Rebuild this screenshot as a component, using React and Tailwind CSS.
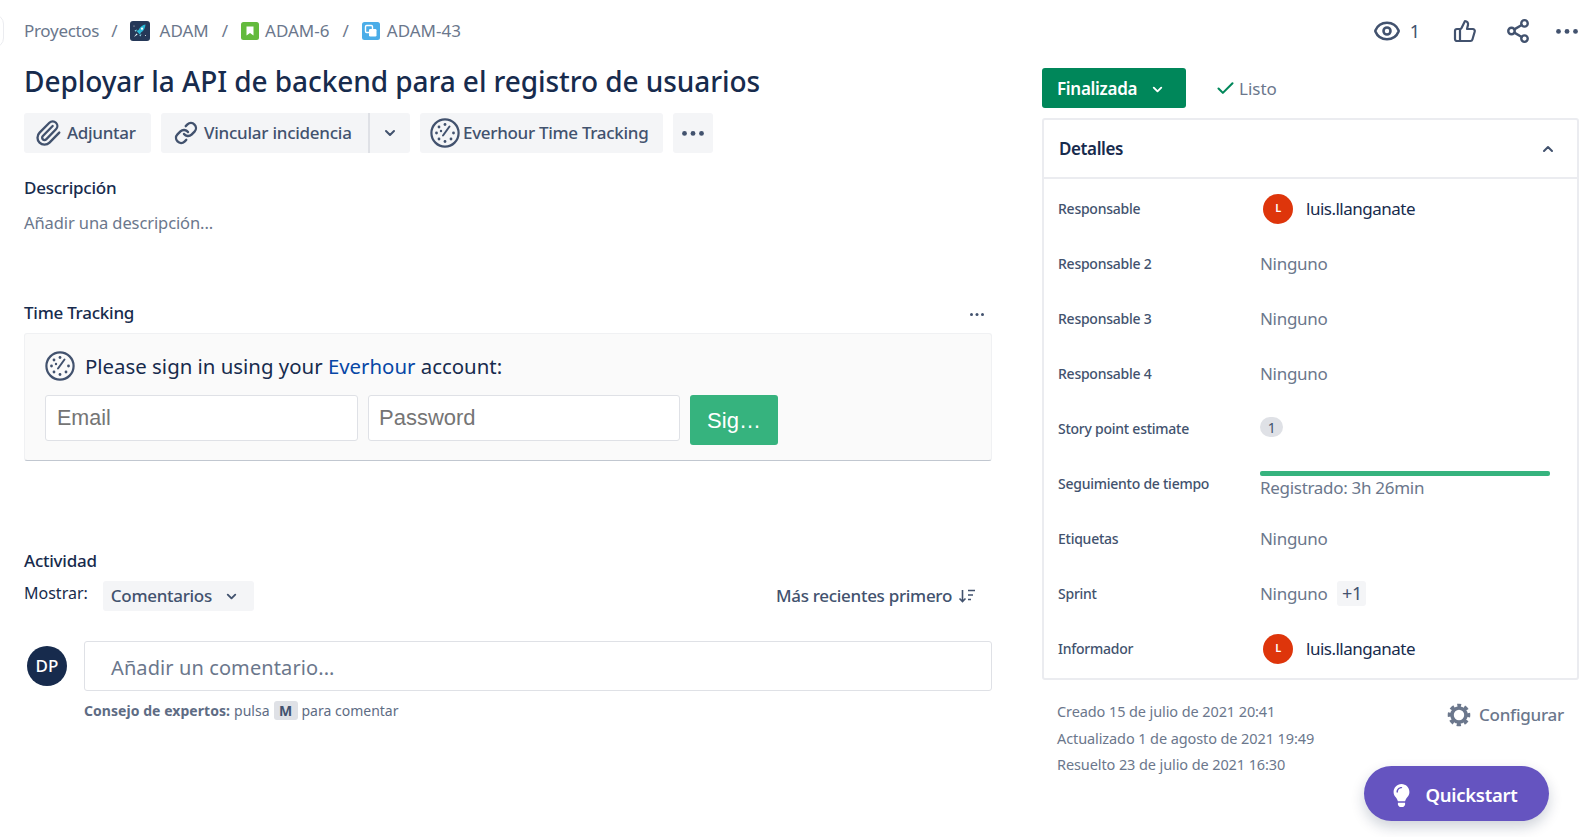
import React from "react";
import { Paperclip, Link, ChevronDown, ChevronUp, Eye, ThumbsUp, Share2, Check } from "lucide-react";
import { FaLightbulb } from "react-icons/fa";

function Everhour({ size = 30 }) {
  return (
    <svg width={size} height={size} viewBox="0 0 30 30" fill="none" className="shrink-0">
      <circle cx="15" cy="15" r="13.6" stroke="#42526e" strokeWidth="2.2" />
      <path d="M13 17.5 19.5 8.5" stroke="#42526e" strokeWidth="2" strokeLinecap="round" />
      <g fill="#42526e">
        <circle cx="15" cy="6.5" r="1.4" />
        <circle cx="9" cy="9" r="1.4" />
        <circle cx="6.5" cy="15" r="1.4" />
        <circle cx="9" cy="21" r="1.4" />
        <circle cx="15" cy="23.5" r="1.4" />
        <circle cx="21" cy="21" r="1.4" />
        <circle cx="23.5" cy="15" r="1.4" />
        <circle cx="11" cy="13" r="1.2" />
      </g>
    </svg>
  );
}

function Rocket() {
  return (
    <svg width="20" height="20" viewBox="0 0 20 20" className="shrink-0">
      <rect width="20" height="20" rx="3" fill="#253858" />
      <path d="M15.5 3.5c-3 .4-5.2 2.4-7 5.4l-2 1.1 3.4 3.4 1.1-1.9c3-1.8 4.3-4.8 4.5-8z" fill="#2ab8d6" />
      <path d="M6.5 12.5 4 16l3.6-2.4z" fill="#e8f6fa" />
      <path d="M7 8.5 4.5 9.5l1.3 1.2zM11.5 13l-1 2.5-1.2-1.3z" fill="#8fdcec" />
      <circle cx="12" cy="7.7" r="1.1" fill="#fff" />
      <circle cx="4" cy="5" r=".5" fill="#fff" />
      <circle cx="15.5" cy="14.5" r=".5" fill="#fff" />
    </svg>
  );
}

function Story() {
  return (
    <svg width="18" height="18" viewBox="0 0 18 18" className="shrink-0">
      <rect width="18" height="18" rx="2.5" fill="#63ba3c" />
      <path d="M5.5 4.5h7v9L9 11l-3.5 2.5z" fill="#fff" />
    </svg>
  );
}

function Subtask() {
  return (
    <svg width="18" height="18" viewBox="0 0 18 18" className="shrink-0">
      <rect width="18" height="18" rx="2.5" fill="#4bade8" />
      <rect x="3.5" y="3.5" width="7" height="7" rx="1.2" fill="none" stroke="#fff" strokeWidth="1.4" />
      <rect x="7" y="7" width="7.5" height="7.5" rx="1.2" fill="#fff" />
    </svg>
  );
}

function Dots({ r = 2, w = 20, gap = 7 }) {
  const c = w / 2;
  return (
    <svg width={w} height={r * 2 + 2} viewBox={`0 0 ${w} ${r * 2 + 2}`} fill="#42526e">
      <circle cx={c - gap} cy={r + 1} r={r} />
      <circle cx={c} cy={r + 1} r={r} />
      <circle cx={c + gap} cy={r + 1} r={r} />
    </svg>
  );
}

function Sort() {
  return (
    <svg width="18" height="16" viewBox="0 0 18 16" fill="none" stroke="#42526e" strokeWidth="1.6">
      <path d="M4.5 2v11M1.5 10.5l3 3 3-3" />
      <path d="M10 2.5h7M10 7h5M10 11.5h3" />
    </svg>
  );
}

function Gear() {
  return (
    <svg width="24" height="24" viewBox="0 0 24 24" fill="none" stroke="#6b778c" className="shrink-0">
      <circle cx="12" cy="12" r="7" strokeWidth="3.6" />
      <circle cx="12" cy="12" r="9.6" strokeWidth="3.4" strokeDasharray="4.2 3.34" strokeDashoffset="2.1" transform="rotate(-90 12 12)" />
    </svg>
  );
}

function Avatar() {
  return (
    <div className="w-[30px] h-[30px] rounded-full bg-[#de350b] text-white text-[11px] font-semibold flex items-center justify-center shrink-0">
      L
    </div>
  );
}

function Row({ label, children }) {
  return (
    <div className="flex items-center h-[55px]">
      <div className="w-[202px] -ml-px shrink-0 text-[14px] font-medium text-[#42526e] tracking-[-0.25px]">{label}</div>
      <div className="flex-1 text-[17px] text-[#6b778c] tracking-[-0.3px]">{children}</div>
    </div>
  );
}

function User() {
  return (
    <div className="flex items-center gap-[13px] pl-[3px] text-[#172b4d] tracking-[-0.5px]">
      <Avatar />
      <span>luis.llanganate</span>
    </div>
  );
}

const Sep = () => <span className="text-[#6b778c]">/</span>;

export default function App() {
  return (
    <div className="relative w-[1595px] h-[837px] overflow-hidden bg-white flex pl-6 gap-[50px] text-[#172b4d] font-['Noto_Sans',sans-serif]">
      <div className="absolute left-[-16px] top-[14px] w-[20px] h-[34px] rounded-full border border-[#ebecf0]" />

      <main className="w-[968px] shrink-0 flex flex-col">
        <nav className="flex items-center h-[20px] mt-[21px] text-[17px] text-[#6b778c]">
          <span className="tracking-[-0.3px]">Proyectos</span>
          <span className="mx-[12px]"><Sep /></span>
          <Rocket />
          <span className="ml-[10px]">ADAM</span>
          <span className="mx-[13px]"><Sep /></span>
          <Story />
          <span className="ml-[6px]">ADAM-6</span>
          <span className="mx-[13px]"><Sep /></span>
          <Subtask />
          <span className="ml-[7px]">ADAM-43</span>
        </nav>

        <h1 className="mt-[18px] h-[44px] leading-[44px] text-[28px] font-medium text-[#172b4d] tracking-[-0.07px] whitespace-nowrap">
          Deployar la API de backend para el registro de usuarios
        </h1>

        <div className="mt-[10px] flex items-center gap-[10px] text-[17px] font-medium text-[#42526e] tracking-[-0.3px]">
          <button className="h-10 w-[127px] rounded-[3px] bg-[#f4f5f7] flex items-center pl-[10px] gap-[5px]">
            <Paperclip size={28} strokeWidth={2} />
            <span>Adjuntar</span>
          </button>
          <div className="h-10 w-[249px] rounded-[3px] bg-[#f4f5f7] flex items-center">
            <button className="h-10 w-[209px] flex items-center pl-[13px] gap-[6px] border-r-2 border-[#dfe1e6] tracking-[-0.25px]">
              <Link size={24} strokeWidth={2.4} />
              <span>Vincular incidencia</span>
            </button>
            <button className="flex-1 flex justify-center">
              <ChevronDown size={16} strokeWidth={3} />
            </button>
          </div>
          <button className="h-10 w-[243px] rounded-[3px] bg-[#f4f5f7] flex items-center pl-[10px] gap-[3px]">
            <Everhour />
            <span>Everhour Time Tracking</span>
          </button>
          <button className="h-10 w-10 rounded-[3px] bg-[#f4f5f7] flex items-center justify-center">
            <Dots r={2.4} w={24} gap={8.5} />
          </button>
        </div>

        <h2 className="mt-[24px] h-[22px] leading-[22px] text-[17px] font-medium tracking-[-0.25px]">Descripción</h2>
        <p className="mt-[13px] h-[22px] leading-[22px] text-[16.5px] text-[#6b778c] tracking-[-0.1px]">Añadir una descripción...</p>

        <div className="mt-[68px] h-[22px] flex items-center justify-between">
          <h2 className="text-[17px] font-medium tracking-[-0.25px]">Time Tracking</h2>
          <span className="mr-[6px] mt-[3px]"><Dots r={1.5} w={18} gap={5.5} /></span>
        </div>

        <section className="mt-[9px] h-[128px] rounded-[3px] bg-[#fafafa] border border-[#f0f1f3] border-b-[#c1c7d0] pl-[20px] pt-[17px]">
          <div className="flex items-center gap-[10px] h-[30px] text-[20.4px]">
            <Everhour />
            <p>
              Please sign in using your <span className="text-[#0747a6]">Everhour</span> account:
            </p>
          </div>
          <form className="mt-[14px] flex items-start gap-[10px]">
            <input placeholder="Email" className="w-[313px] h-[46px] px-[11px] rounded-[3px] bg-white border border-[#dfe1e6] text-[21.5px] font-['Liberation_Sans',sans-serif] placeholder:text-[#757575]" />
            <input placeholder="Password" className="w-[312px] h-[46px] px-[10px] rounded-[3px] bg-white border border-[#dfe1e6] text-[22px] font-['Liberation_Sans',sans-serif] placeholder:text-[#757575]" />
            <button type="button" className="w-[88px] h-[50px] rounded-[3px] bg-[#36b37e] text-white text-[22px] font-['Liberation_Sans',sans-serif]">Sig…</button>
          </form>
        </section>

        <h2 className="mt-[89px] h-[22px] leading-[22px] text-[17px] font-medium tracking-[-0.25px]">Actividad</h2>

        <div className="mt-[9px] flex items-center h-[30px] pr-[16px]">
          <span className="text-[16px] text-[#172b4d] -mt-[6px]">Mostrar:</span>
          <button className="ml-[15px] w-[151px] h-[30px] rounded-[3px] bg-[#f4f5f7] flex items-center gap-[12px] pl-[8px] text-[17px] font-medium text-[#42526e] tracking-[-0.3px]">
            <span>Comentarios</span>
            <ChevronDown size={15} strokeWidth={3} />
          </button>
          <div className="ml-auto flex items-center gap-[6px] text-[17px] font-medium text-[#42526e] tracking-[-0.3px]">
            <span>Más recientes primero</span>
            <Sort />
          </div>
        </div>

        <div className="mt-[30px] flex items-center gap-[17px] pl-[3px]">
          <div className="w-10 h-10 rounded-full bg-[#172b4d] text-white text-[17px] font-medium flex items-center justify-center shrink-0">DP</div>
          <div className="flex-1 h-[50px] pt-[3px] rounded-[3px] border border-[#dfe1e6] flex items-center pl-[26px] text-[20px] text-[#6b778c] tracking-[0.1px]">
            Añadir un comentario...
          </div>
        </div>

        <p className="mt-[9px] ml-[60px] h-[20px] flex items-center text-[14px] text-[#5e6c84]">
          <span className="font-bold tracking-[0.05px]">Consejo de expertos:</span>
          <span className="ml-[4px]">pulsa</span>
          <span className="mx-[4px] w-[24px] h-[19px] rounded-[3px] bg-[#dfe1e6] text-[#42526e] font-bold flex items-center justify-center">M</span>
          <span>para comentar</span>
        </p>
      </main>

      <aside className="w-[537px] shrink-0 flex flex-col">
        <div className="h-[20px] mt-[21px] flex items-center justify-end text-[#42526e]">
          <Eye size={28} strokeWidth={2.2} />
          <span className="ml-[9px] text-[18px] text-[#42526e]">1</span>
          <ThumbsUp size={24} strokeWidth={2.2} className="ml-[33px]" />
          <Share2 size={26} strokeWidth={2.2} className="ml-[28px]" />
          <span className="ml-[24px]"><Dots r={2.4} w={24} gap={8.5} /></span>
        </div>

        <div className="mt-[27px] flex items-center h-10">
          <button className="w-[144px] h-10 pt-[2px] rounded-[3px] bg-[#00875a] text-white text-[17px] font-semibold tracking-[-0.3px] flex items-center pl-[15px] gap-[13px]">
            <span>Finalizada</span>
            <ChevronDown size={15} strokeWidth={3} />
          </button>
          <Check size={21} strokeWidth={2.4} className="ml-[29px] text-[#00875a]" />
          <span className="ml-[3px] mt-[2px] text-[17px] text-[#6b778c]">Listo</span>
        </div>

        <section className="mt-[10px] h-[562px] rounded-[3px] border-2 border-[#ebecf0] px-[15px] flex flex-col">
          <div className="-mx-[15px] px-[15px] h-[59px] shrink-0 border-b-2 border-[#ebecf0] flex items-center justify-between">
            <h2 className="text-[17px] font-semibold tracking-[-0.4px]">Detalles</h2>
            <ChevronUp size={16} strokeWidth={3} className="mr-[6px] text-[#42526e]" />
          </div>
          <div className="pt-[2px]">
            <Row label="Responsable"><User /></Row>
            <Row label="Responsable 2">Ninguno</Row>
            <Row label="Responsable 3">Ninguno</Row>
            <Row label="Responsable 4">Ninguno</Row>
            <Row label="Story point estimate">
              <span className="flex items-center justify-center -mt-[3px] w-[23px] h-[20px] rounded-full bg-[#dfe1e6] text-[14px] text-[#42526e]">1</span>
            </Row>
            <Row label="Seguimiento de tiempo">
              <div className="w-[290px] pt-[3px]">
                <div className="h-[5px] rounded-[2px] bg-[#36b37e]" />
                <div className="leading-[24px]">Registrado: 3h 26min</div>
              </div>
            </Row>
            <Row label="Etiquetas">Ninguno</Row>
            <Row label="Sprint">
              <div className="flex items-center gap-[10px]">
                <span>Ninguno</span>
                <span className="w-[29px] h-[25px] rounded-[3px] bg-[#f4f5f7] flex items-center justify-center text-[18px] text-[#42526e]">+1</span>
              </div>
            </Row>
            <Row label="Informador"><User /></Row>
          </div>
        </section>

        <div className="mt-[18px] flex justify-between pl-[15px] pr-[15px]">
          <div className="text-[14.5px] text-[#6b778c] tracking-[-0.1px] leading-[26.5px]">
            <p>Creado 15 de julio de 2021 20:41</p>
            <p>Actualizado 1 de agosto de 2021 19:49</p>
            <p>Resuelto 23 de julio de 2021 16:30</p>
          </div>
          <div className="flex items-center gap-[8px] h-[26px] mt-[4px] text-[17px] font-medium text-[#6b778c] tracking-[-0.25px]">
            <Gear />
            <span>Configurar</span>
          </div>
        </div>

        <button className="absolute left-[1364px] top-[766px] w-[185px] h-[55px] pt-[3px] pr-[6px] rounded-full bg-[#6554c0] text-white text-[18.5px] font-semibold tracking-[-0.3px] flex items-center justify-center gap-[13px] shadow-[0_6px_14px_rgba(9,30,66,0.2)]">
          <FaLightbulb size={23} />
          <span>Quickstart</span>
        </button>
      </aside>
    </div>
  );
}
